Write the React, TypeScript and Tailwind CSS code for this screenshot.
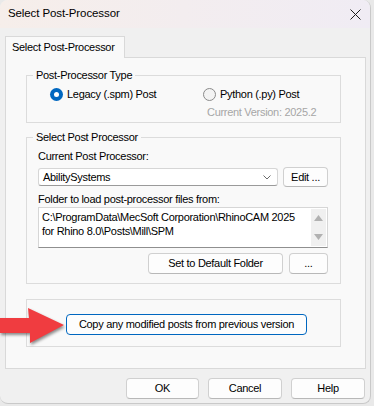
import React from 'react';

const font = "font-['Liberation_Sans',Arial,sans-serif]";

function Btn({ children, className = '' }: { children: React.ReactNode; className?: string }) {
  return (
    <div
      className={`flex items-center justify-center rounded-[4px] border border-[#d0d0d0] border-b-[#b8b8b8] bg-[#fdfdfd] text-[11px] tracking-[-0.3px] text-black ${className}`}
    >
      {children}
    </div>
  );
}

function GroupBox({ label, className = '', children }: { label?: string; className?: string; children: React.ReactNode }) {
  return (
    <div className={`relative ml-[20px] w-[315px] border border-[#dcdcdc] ${className}`}>
      {label && (
        <span className="absolute -top-[8px] left-[6px] bg-[#f9f9f9] px-[3px] text-[11px] leading-[14px] tracking-[-0.3px] text-black">
          {label}
        </span>
      )}
      {children}
    </div>
  );
}

function Radio({ checked, label }: { checked?: boolean; label: string }) {
  return (
    <div className="flex items-center gap-[4px]">
      {checked ? (
        <span className="flex h-[13px] w-[13px] items-center justify-center rounded-full bg-[#0067c0]">
          <span className="h-[5px] w-[5px] rounded-full bg-white" />
        </span>
      ) : (
        <span className="h-[13px] w-[13px] rounded-full border border-[#8a8a8a] bg-[#f3f3f3]" />
      )}
      <span className="text-[11px] leading-[14px] tracking-[-0.3px]">{label}</span>
    </div>
  );
}

export default function App() {
  return (
    <div className={`relative h-[406px] w-[374px] overflow-hidden bg-[#e9e9e9] ${font} text-black`}>
      <div className="flex h-[404px] w-[371px] flex-col overflow-hidden rounded-lg border-r border-b border-[#c9c9c9] bg-[#f0f0f0]">
        {/* title bar */}
        <div className="flex h-[28px] items-center justify-between bg-gradient-to-r from-[#f6eeea] to-[#f0ecf4] pl-[8px] pr-[7px]">
          <span className="text-[11.5px] tracking-[-0.1px]">Select Post-Processor</span>
          <svg width="11" height="11" viewBox="0 0 11 11" className="mr-[2px]">
            <path d="M0.5 0.5 L10.5 10.5 M10.5 0.5 L0.5 10.5" stroke="#1c1c1c" strokeWidth="1" />
          </svg>
        </div>

        <div className="flex flex-col px-[5px] pt-[8px]">
          {/* tab strip */}
          <div className="flex">
            <div className="-mb-px z-10 flex h-[22px] w-[120px] items-center border border-b-0 border-[#d9d9d9] bg-[#f9f9f9] pl-[6px] text-[11px] tracking-[-0.3px]">
              Select Post-Processor
            </div>
          </div>

          {/* tab panel */}
          <div className="h-[312px] w-[361px] border border-[#d9d9d9] bg-[#f9f9f9]">
            <GroupBox label="Post-Processor Type" className="mt-[17px] h-[48px]">
              <div className="flex pl-[23px] pt-[11px]">
                <div className="w-[153px]">
                  <Radio checked label="Legacy (.spm) Post" />
                </div>
                <Radio label="Python (.py) Post" />
              </div>
              <div className="ml-[180px] mt-[5px] text-[11px] leading-[13px] tracking-[-0.3px] text-[#a6a6a6]">
                Current Version: 2025.2
              </div>
            </GroupBox>

            <GroupBox label="Select Post Processor" className="mt-[14px] h-[147px]">
              <div className="ml-[11px] flex w-[290px] flex-col">
                <div className="mt-[12px] h-[13px] text-[11px] leading-[13px] tracking-[-0.3px]">Current Post Processor:</div>
                <div className="mt-[4px] flex h-[20px] items-center justify-between">
                  <div className="flex h-[18px] w-[240px] items-center justify-between rounded-[3px] border border-[#d6d6d6] border-b-[#9a9a9a] bg-white pl-[4px] pr-[6px]">
                    <span className="text-[11px] tracking-[-0.3px]">AbilitySystems</span>
                    <svg width="8" height="5" viewBox="0 0 8 5">
                      <path d="M0.5 0.5 L4 4 L7.5 0.5" fill="none" stroke="#6b6b6b" strokeWidth="1" />
                    </svg>
                  </div>
                  <Btn className="h-[20px] w-[45px]">Edit ...</Btn>
                </div>
                <div className="mt-[6px] h-[13px] text-[11px] leading-[13px] tracking-[-0.3px]">
                  Folder to load post-processor files from:
                </div>
                <div className="mt-[1px] flex h-[41px] border border-[#d6d6d6] border-b-[#8f8f8f] bg-white">
                  <div className="flex-1 pl-[3px] pt-[2px] text-[11px] leading-[14px] tracking-[-0.3px]">
                    <div>C:\ProgramData\MecSoft Corporation\RhinoCAM 2025</div>
                    <div>for Rhino 8.0\Posts\Mill\SPM</div>
                  </div>
                  <div className="my-[1px] mr-[1px] flex w-[15px] flex-col items-center justify-between bg-[#f0f0f0] py-[6px]">
                    <svg width="9" height="6" viewBox="0 0 9 6">
                      <path d="M4.5 0 L9 6 L0 6 Z" fill="#b1b1b1" />
                    </svg>
                    <svg width="9" height="6" viewBox="0 0 9 6">
                      <path d="M0 0 L9 0 L4.5 6 Z" fill="#b1b1b1" />
                    </svg>
                  </div>
                </div>
                <div className="mt-[5px] flex justify-end gap-[6px]">
                  <Btn className="h-[21px] w-[135px]">Set to Default Folder</Btn>
                  <Btn className="h-[21px] w-[39px]">...</Btn>
                </div>
              </div>
            </GroupBox>

            <GroupBox className="mt-[15px] h-[48px]">
              <div className="ml-[39px] mt-[14px] flex h-[21px] w-[241px] items-center justify-center rounded-[4px] border border-[#0067c0] bg-[#fdfdfd] text-[11px] tracking-[-0.3px]">
                Copy any modified posts from previous version
              </div>
            </GroupBox>
          </div>

          {/* dialog buttons */}
          <div className="mt-[9px] flex justify-end gap-[9px]">
            <Btn className="h-[21px] w-[73px]">OK</Btn>
            <Btn className="h-[21px] w-[74px]">Cancel</Btn>
            <Btn className="h-[21px] w-[74px]">Help</Btn>
          </div>
        </div>
      </div>

      {/* red annotation arrow */}
      <svg
        className="absolute left-0 top-[305px]"
        width="70"
        height="44"
        viewBox="0 0 70 44"
        style={{ filter: 'drop-shadow(1px 2px 1.5px rgba(0,0,0,0.45))' }}
      >
        <path d="M0 13 L29 13 L28 3 L64 20 L30 38 L30 28 L0 28 Z" fill="#f03c40" />
      </svg>
    </div>
  );
}
